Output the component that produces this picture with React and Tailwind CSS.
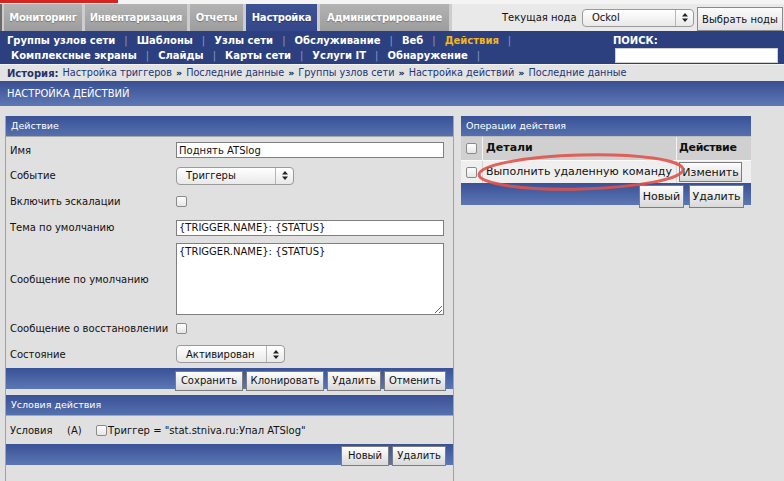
import React from "react";

const Btn = ({ children, w, h = 20, size = 10 }) => (
  <button
    className="border border-[#7d7d7d] bg-linear-to-b from-[#fdfdfd] to-[#d9d9d9] text-[#111] leading-none flex items-center justify-center whitespace-nowrap"
    style={{ width: w, height: h, fontSize: size }}
  >
    {children}
  </button>
);

const Check = () => (
  <span className="inline-block shrink-0 w-[11px] h-[11px] rounded-[2px] border border-[#8a8a8a] bg-linear-to-b from-white to-[#e6e6e6]" />
);

const Select = ({ children, w }) => (
  <div
    className="h-[18px] rounded-[4px] border border-[#9a9a9a] bg-linear-to-b from-white to-[#e9e9e9] flex items-center text-[10px]"
    style={{ width: w }}
  >
    <span className="flex-1 pl-[9px]">{children}</span>
    <span className="w-[18px] h-full border-l border-[#b5b5b5] flex items-center justify-center">
      <svg width="6" height="9" viewBox="0 0 6 9">
        <path d="M3 0 L6 3.5 L0 3.5 Z M3 9 L6 5.5 L0 5.5 Z" fill="#222" />
      </svg>
    </span>
  </div>
);

const Tab = ({ children, w, active }) => (
  <div
    className={
      "h-full flex items-center justify-center font-bold text-[10px] tracking-[-0.2px] text-white [text-shadow:0_1px_1px_rgba(0,0,0,0.3)] whitespace-nowrap " +
      (active
        ? "bg-linear-to-b from-[#3f5393] to-[#34478a]"
        : "bg-linear-to-b from-[#b3b3b3] to-[#9d9d9d]")
    }
    style={{ width: w }}
  >
    {children}
  </div>
);

const Sep = () => <span className="text-[#8d99c4] font-normal mx-[9px]">|</span>;

const PanelHead = ({ children }) => (
  <div className="h-[20px] flex items-center pl-[5px] text-white text-[9.5px] bg-linear-to-b from-[#3a5196] to-[#5570ae]">
    {children}
  </div>
);

const Row = ({ label, h, children }) => (
  <div className="flex items-center" style={{ height: h }}>
    <div className="w-[170px] pl-[4px] whitespace-nowrap">{label}</div>
    <div className="flex items-center">{children}</div>
  </div>
);

const Crumb = () => <span className="mx-[4px] text-[9.5px] font-bold text-[#1a1a1a]">»</span>;

export default function App() {
  return (
    <div className="w-[784px] h-[481px] overflow-hidden bg-[#e0e0e0] font-['DejaVu_Sans',sans-serif] text-[10px] text-[#111] relative">
      {/* top strip */}
      <div className="h-[4px] bg-[#f4f4f4]">
        <div className="w-[118px] h-[3px] bg-[#d8231f]" />
      </div>

      {/* main tabs */}
      <div className="h-[27px] flex bg-[#e9e9e9]">
        <div className="flex h-full gap-[3px] bg-[#cdcdcd] pl-[2px] pr-[3px] border-l-[2px] border-[#6a6a6a]">
          <Tab w={78}>Мониторинг</Tab>
          <Tab w={102}>Инвентаризация</Tab>
          <Tab w={53}>Отчеты</Tab>
          <Tab w={71} active>Настройка</Tab>
          <Tab w={129}>Администрирование</Tab>
        </div>
        <div className="flex items-center ml-[50px]">
          <span className="whitespace-nowrap w-[80px]">Текущая нода</span>
          <Select w={112}>Ockol</Select>
          <button className="ml-[3px] h-[24px] w-[86px] mt-[3px] border border-[#8a8a8a] bg-linear-to-b from-[#fbfbfb] to-[#e2e2e2] text-[10px] whitespace-nowrap">
            Выбрать ноды
          </button>
        </div>
      </div>

      {/* sub nav */}
      <div className="h-[33px] bg-[#2c4080] flex text-white font-bold text-[10px]">
        <div className="flex flex-col w-[606px]">
          <div className="h-[16px] flex items-center pl-[7px] pt-[2px] whitespace-nowrap">
            <span>Группы узлов сети</span>
            <Sep />
            <span>Шаблоны</span>
            <Sep />
            <span>Узлы сети</span>
            <Sep />
            <span>Обслуживание</span>
            <Sep />
            <span>Веб</span>
            <Sep />
            <span className="text-[#f2b51c]">Действия</span>
            <Sep />
          </div>
          <div className="h-[17px] flex items-center pl-[11px] whitespace-nowrap">
            <span>Комплексные экраны</span>
            <Sep />
            <span>Слайды</span>
            <Sep />
            <span>Карты сети</span>
            <Sep />
            <span>Услуги IT</span>
            <Sep />
            <span>Обнаружение</span>
            <Sep />
          </div>
        </div>
        <div className="flex flex-col">
          <div className="h-[16px] flex items-center pl-[7px] pt-[2px]">ПОИСК:</div>
          <div className="h-[17px] flex items-center pl-[9px]">
            <div className="w-[163px] h-[15px] bg-white border border-[#d0d0d0]" />
          </div>
        </div>
      </div>

      {/* breadcrumb */}
      <div className="h-[17px] bg-[#e3e3e3] border-t border-[#f2f2f2] flex items-center pl-[7px] text-[#203578] text-[9.7px] whitespace-nowrap">
        <span className="font-bold text-[#26326a] mr-[4px] text-[10px]">История:</span>
        <span>Настройка триггеров</span>
        <Crumb />
        <span>Последние данные</span>
        <Crumb />
        <span>Группы узлов сети</span>
        <Crumb />
        <span>Настройка действий</span>
        <Crumb />
        <span>Последние данные</span>
      </div>

      {/* title */}
      <div className="h-[25px] flex items-center pl-[7px] text-white text-[10px] bg-linear-to-b from-[#394f93] to-[#5e78b4]">
        НАСТРОЙКА ДЕЙСТВИЙ
      </div>

      {/* content */}
      <div className="flex items-start pt-[10px] pl-[5px] gap-[7px]">
        {/* left column */}
        <div className="w-[449px] h-[400px] border-x border-[#a3a3a3] flex flex-col">
          <PanelHead>Действие</PanelHead>
          <div className="border-t border-[#a8a8a8]">
            <Row label="Имя" h={26}>
              <div className="w-[268px] h-[16px] bg-white border border-[#7f7f7f] flex items-center pl-[2px]">
                Поднять ATSlog
              </div>
            </Row>
            <Row label="Событие" h={25}>
              <Select w={118}>Триггеры</Select>
            </Row>
            <Row label="Включить эскалации" h={26}>
              <Check />
            </Row>
            <Row label="Тема по умолчанию" h={27}>
              <div className="w-[268px] h-[16px] bg-white border border-[#7f7f7f] flex items-center pl-[2px]">
                {"{TRIGGER.NAME}: {STATUS}"}
              </div>
            </Row>
            <Row label="Сообщение по умолчанию" h={76}>
              <textarea
                readOnly
                className="w-[268px] h-[72px] bg-white border border-[#7f7f7f] pl-[2px] pt-[1px] text-[10px] leading-[13px] font-['DejaVu_Sans',sans-serif] resize-y outline-none"
                defaultValue={"{TRIGGER.NAME}: {STATUS}"}
              />
            </Row>
            <Row label="Сообщение о восстановлении" h={23}>
              <Check />
            </Row>
            <Row label="Состояние" h={28}>
              <Select w={109}>Активирован</Select>
            </Row>
          </div>
          <div className="h-[21px] flex justify-end items-start pr-[7px] bg-linear-to-b from-[#3a5196] to-[#5b77b3]">
            <div className="mt-[3px] flex gap-[3px]">
              <Btn w={68}>Сохранить</Btn>
              <Btn w={78}>Клонировать</Btn>
              <Btn w={54}>Удалить</Btn>
              <Btn w={62}>Отменить</Btn>
            </div>
          </div>

          <div className="h-[6px]" />
          <PanelHead>Условия действия</PanelHead>
          <div className="h-[29px] flex items-center pl-[4px] border-t border-[#a8a8a8] whitespace-nowrap">
            <span className="w-[57px]">Условия</span>
            <span className="w-[29px]">(A)</span>
            <Check />
            <span className="ml-[1px]">Триггер = "stat.stniva.ru:Упал ATSlog"</span>
          </div>
          <div className="h-[21px] flex justify-end items-start pr-[7px] bg-linear-to-b from-[#3a5196] to-[#5b77b3]">
            <div className="mt-[2px] flex gap-[3px]">
              <Btn w={48}>Новый</Btn>
              <Btn w={54}>Удалить</Btn>
            </div>
          </div>
        </div>

        {/* right column */}
        <div className="w-[290px] flex flex-col relative text-[11px]">
          <PanelHead>Операции действия</PanelHead>
          <div className="flex h-[24px] bg-[#d0d0d0] border-t border-[#bdbdbd] font-bold">
            <div className="w-[22px] flex items-center justify-center border-r border-[#f3f3f3]">
              <Check />
            </div>
            <div className="w-[194px] flex items-center pl-[3px] border-r border-[#f3f3f3]">Детали</div>
            <div className="flex-1 flex items-center pl-[2px] tracking-[-0.3px]">Действие</div>
          </div>
          <div className="flex h-[23px] bg-[#efefef] border-t border-[#fafafa]">
            <div className="w-[22px] flex items-center justify-center border-r border-[#d5d5d5]">
              <Check />
            </div>
            <div className="w-[194px] flex items-center pl-[3px] border-r border-[#d5d5d5] whitespace-nowrap">
              Выполнить удаленную команду
            </div>
            <div className="flex-1 flex items-center pl-[2px]">
              <Btn w={63} size={11}>Изменить</Btn>
            </div>
          </div>
          <div className="h-[22px] flex justify-end items-start pr-[7px] bg-linear-to-b from-[#3a5196] to-[#5b77b3]">
            <div className="mt-[2px] flex gap-[5px]">
              <Btn w={45} h={23} size={11}>Новый</Btn>
              <Btn w={55} h={23} size={11}>Удалить</Btn>
            </div>
          </div>
          {/* red annotation ellipse */}
          <svg
            className="absolute left-[15px] top-[36px] pointer-events-none"
            width="210"
            height="40"
            viewBox="0 0 210 40"
          >
            <ellipse cx="105" cy="20" rx="102" ry="17" fill="none" stroke="#e0524b" strokeWidth="3" opacity="0.9" transform="rotate(-1.5 105 20)" />
          </svg>
        </div>
      </div>
    </div>
  );
}
